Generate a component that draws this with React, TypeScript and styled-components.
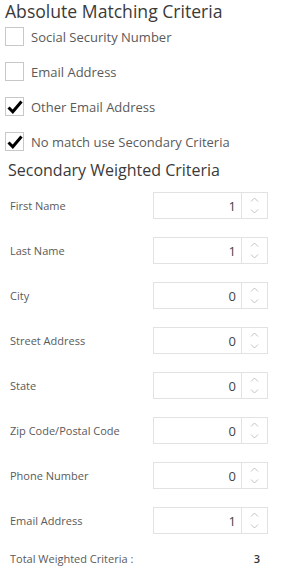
import styled, { createGlobalStyle } from 'styled-components';

const GlobalStyle = createGlobalStyle`
  body {
    margin: 0;
    background: #fff;
    font-family: "Open Sans", "Noto Sans", sans-serif;
  }
`

const Panel = styled.div`
  width: 282px;
  padding: 0 0 0 5px;
  box-sizing: border-box;
`

const Title = styled.h2<{ size: number; indent?: number }>`
  margin: 0;
  padding-left: ${p => p.indent ?? 0}px;
  font-size: ${p => p.size}px;
  font-weight: 400;
  color: #3a3a3a;
  line-height: 22px;
`

const CheckList = styled.div`
  display: flex;
  flex-direction: column;
  gap: 16px;
  padding: 5px 0 8px 0;
`

const CheckRow = styled.label`
  display: flex;
  align-items: center;
  gap: 7px;
  font-size: 13px;
  color: #5a5a5a;
`

const Box = styled.span`
  width: 17px;
  height: 17px;
  border: 1px solid #c8c8c8;
  display: flex;
  align-items: center;
  justify-content: center;
  flex-shrink: 0;
`

const FieldList = styled.div`
  display: flex;
  flex-direction: column;
  gap: 18px;
  padding: 11px 14px 0 5px;
`

const FieldRow = styled.div`
  display: flex;
  align-items: center;
  justify-content: space-between;
  font-size: 11px;
  color: #5a5a5a;
`

const Spinner = styled.div`
  width: 115px;
  height: 27px;
  border: 1px solid #e2e2e2;
  box-sizing: border-box;
  display: flex;
`

const Value = styled.div`
  flex: 1;
  display: flex;
  align-items: center;
  justify-content: flex-end;
  padding-right: 5px;
  font-size: 13px;
  color: #444;
`

const Arrows = styled.div`
  width: 25px;
  border-left: 1px solid #e2e2e2;
  display: flex;
  flex-direction: column;
  align-items: center;
  justify-content: center;
  gap: 7px;
`

const TotalRow = styled(FieldRow)`
  margin-top: -1px;
  padding-right: 8px;
`

const TotalValue = styled.span`
  font-size: 11px;
  color: #333;
  font-weight: 600;
`

const Check = () => (
  <svg width="16" height="14" viewBox="0 0 16 14">
    <path d="M1.5 7.5 L5.8 11.8 L14.5 1.5" fill="none" stroke="#000" strokeWidth="3" />
  </svg>
)

const Chevron = ({ up }: { up: boolean }) => (
  <svg width="9" height="5" viewBox="0 0 9 5">
    <path d={up ? 'M1 4.5 L4.5 1 L8 4.5' : 'M1 0.5 L4.5 4 L8 0.5'} fill="none" stroke="#c2c2c2" strokeWidth="1" />
  </svg>
)

const checks = [
  { label: 'Social Security Number', on: false },
  { label: 'Email Address', on: false },
  { label: 'Other Email Address', on: true },
  { label: 'No match use Secondary Criteria', on: true },
]

const fields = [
  { label: 'First Name', value: 1 },
  { label: 'Last Name', value: 1 },
  { label: 'City', value: 0 },
  { label: 'Street Address', value: 0 },
  { label: 'State', value: 0 },
  { label: 'Zip Code/Postal Code', value: 0 },
  { label: 'Phone Number', value: 0 },
  { label: 'Email Address', value: 1 },
]

const App = () => {
  const total = fields.reduce((s, f) => s + f.value, 0);
  return (
    <Panel>
      <GlobalStyle />
      <Title size={17.6}>Absolute Matching Criteria</Title>
      <CheckList>
        {checks.map(c => (
          <CheckRow key={c.label}>
            <Box>{c.on ? <Check /> : null}</Box>
            {c.label}
          </CheckRow>
        ))}
      </CheckList>
      <Title size={16} indent={3}>Secondary Weighted Criteria</Title>
      <FieldList>
        {fields.map(f => (
          <FieldRow key={f.label}>
            <span>{f.label}</span>
            <Spinner>
              <Value>{f.value}</Value>
              <Arrows>
                <Chevron up={true} />
                <Chevron up={false} />
              </Arrows>
            </Spinner>
          </FieldRow>
        ))}
        <TotalRow>
          <span>Total Weighted Criteria :</span>
          <TotalValue>{total}</TotalValue>
        </TotalRow>
      </FieldList>
    </Panel>
  );
}

export default App;
